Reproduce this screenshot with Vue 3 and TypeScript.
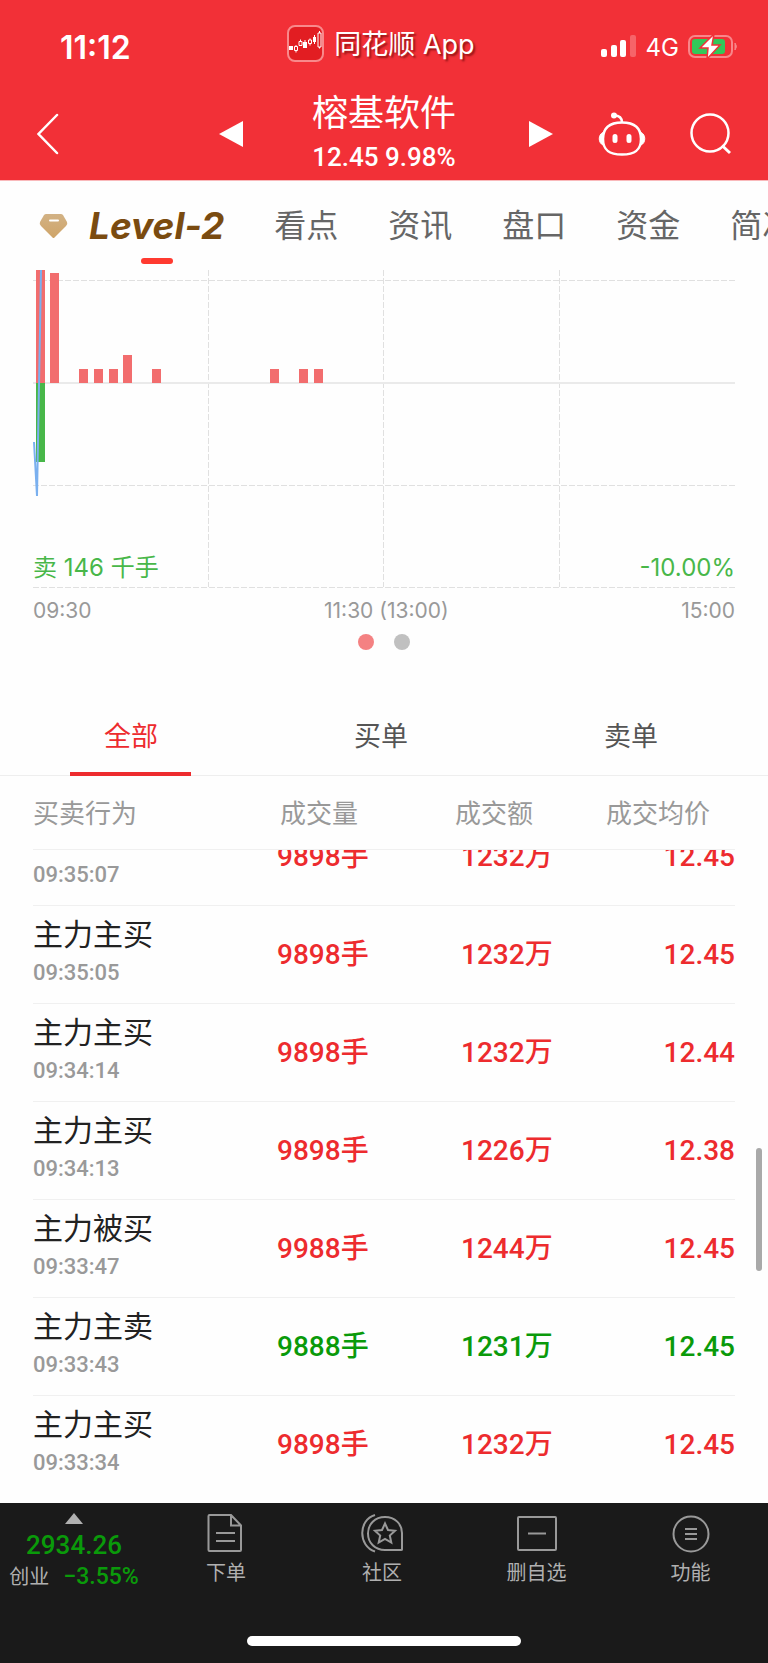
<script setup lang="ts">
interface Deal {
  action: string
  time: string
  volume: string
  amount: string
  price: string
  sell?: boolean
}

interface Bar {
  x: number
  y: number
  h: number
}

const sections: string[] = ['看点', '资讯', '盘口', '资金', '简况']
const filters: string[] = ['全部', '买单', '卖单']

const deals: Deal[] = [
  { action: '主力主买', time: '09:35:07', volume: '9898手', amount: '1232万', price: '12.45' },
  { action: '主力主买', time: '09:35:05', volume: '9898手', amount: '1232万', price: '12.45' },
  { action: '主力主买', time: '09:34:14', volume: '9898手', amount: '1232万', price: '12.44' },
  { action: '主力主买', time: '09:34:13', volume: '9898手', amount: '1226万', price: '12.38' },
  { action: '主力被买', time: '09:33:47', volume: '9988手', amount: '1244万', price: '12.45' },
  { action: '主力主卖', time: '09:33:43', volume: '9888手', amount: '1231万', price: '12.45', sell: true },
  { action: '主力主买', time: '09:33:34', volume: '9898手', amount: '1232万', price: '12.45' },
]

const buyBars: Bar[] = [
  { x: 3, y: 0, h: 113 },
  { x: 17, y: 3, h: 110 },
  { x: 46, y: 99, h: 14 },
  { x: 61, y: 99, h: 14 },
  { x: 76, y: 99, h: 14 },
  { x: 90, y: 85, h: 28 },
  { x: 119, y: 99, h: 14 },
  { x: 237, y: 99, h: 14 },
  { x: 266, y: 99, h: 14 },
  { x: 281, y: 99, h: 14 },
]
</script>

<template>
  <div class="page">
    <header class="top">
      <div class="status">
        <span class="clock">11:12</span>
        <span class="brand">
          <svg class="logo" width="38" height="38" viewBox="0 0 38 38" aria-hidden="true">
            <rect x="1" y="1" width="35" height="35" rx="7" fill="#e21d22" stroke="#f8898b" stroke-width="2" />
            <path d="M2 21h4v4H2zM16 17h4v6h-4zM26 12h3v5h-3z" fill="#fff" />
            <g stroke="#fff" stroke-width="1" fill="none">
              <path d="M18 15v2M27.500 10v9" />
              <path d="M7.500 21.500h3v4h-3zM9 20v1.500M9 25.500v2M12 16.500h3v4h-3zM13.500 14.500v2M21.500 15h3v3.500h-3zM23 13.500V15M23 18.500v2M31 8h3v14h-3zM32.500 6v2M32.500 22v1.500" />
            </g>
          </svg>
          <span class="brand-name">同花顺 App</span>
        </span>
        <span class="signals">
          <svg width="36" height="24" viewBox="0 0 36 24" aria-hidden="true">
            <rect x="0" y="14" width="6" height="8" rx="2" fill="#fff" />
            <rect x="10" y="10" width="6" height="12" rx="2" fill="#fff" />
            <rect x="19" y="5" width="6" height="17" rx="2" fill="#fff" />
            <rect x="29" y="0" width="6" height="22" rx="2" fill="#f66469" />
          </svg>
          <span>4G</span>
          <svg width="50" height="26" viewBox="0 0 50 26" aria-hidden="true">
            <rect x="1" y="2" width="43" height="21" rx="6" fill="none" stroke="#f8868a" stroke-width="2" />
            <path d="M47 9q3 3.500 0 7z" fill="#f8868a" stroke="#f8868a" />
            <rect x="4" y="5" width="33" height="15" rx="3" fill="#33c759" />
            <path d="M26 0 12 14h8l-1 11L32 11h-8z" fill="#fff" stroke="#f13038" stroke-width="1.500" />
          </svg>
        </span>
      </div>
      <nav class="stockbar" aria-label="个股">
        <div class="side left">
          <button type="button" aria-label="返回">
            <svg width="22" height="42" viewBox="0 0 22 42"><path d="M20 2 1.500 21 20 40" fill="none" stroke="#fff" stroke-width="2.500" stroke-linecap="round" /></svg>
          </button>
          <button type="button" aria-label="上一只">
            <svg width="24" height="26" viewBox="0 0 24 26"><path d="M0 13 24 0v26z" fill="#fff" /></svg>
          </button>
        </div>
        <div class="name">
          <h1>榕基软件</h1>
          <p>12.45 9.98%</p>
        </div>
        <div class="side right">
          <button type="button" aria-label="下一只">
            <svg width="24" height="26" viewBox="0 0 24 26"><path d="M24 13 0 0v26z" fill="#fff" /></svg>
          </button>
          <button type="button" aria-label="助手">
            <svg width="48" height="44" viewBox="0 0 48 44" fill="none" stroke="#fff" stroke-width="2.500">
              <path d="M24 10.500c13 0 19 5.500 19 16.500s-6 15.500-19 15.500S5 38 5 27s6-16.500 19-16.500z" />
              <path d="M16 3.500c5 0 8 2 8 7" />
              <circle cx="16" cy="3.500" r="3" fill="#fff" stroke="none" />
              <path d="M5 20.500c-5 2-5 10.500 0 12.500zM43 20.500c5 2 5 10.500 0 12.500z" fill="#fff" stroke-width="1" />
              <path d="M17 24.500v4M31 24.500v4" stroke-width="5" stroke-linecap="round" />
            </svg>
          </button>
          <button type="button" aria-label="搜索">
            <svg width="42" height="42" viewBox="0 0 42 42" fill="none" stroke="#fff" stroke-width="2.500">
              <circle cx="20" cy="20" r="18.500" />
              <path d="M32 32.500 40 40" stroke-width="3" />
            </svg>
          </button>
        </div>
      </nav>
    </header>

    <nav class="sections" aria-label="栏目">
      <svg class="gem" width="34" height="30" viewBox="0 0 34 30" aria-hidden="true">
        <defs>
          <linearGradient id="gem" x1="0" y1="0" x2="0" y2="1">
            <stop offset="0" stop-color="#d2b285" />
            <stop offset="1" stop-color="#cfa468" />
          </linearGradient>
        </defs>
        <path d="M10 3h15q1 0 2 1l4 7q1 2-1 4L18.500 26.500q-1 1-2 0L5 15q-2-2-1-4l4-7q1-1 2-1z" fill="url(#gem)" />
        <path d="M14 9.500h8" stroke="#fff" stroke-width="2" stroke-linecap="round" />
      </svg>
      <a class="level" href="#level2">Level-2</a>
      <a v-for="s in sections" :key="s" :href="'#' + s">{{ s }}</a>
    </nav>

    <section class="chart">
      <div class="plot">
        <svg viewBox="0 0 702 318" aria-hidden="true">
          <g stroke="#e0e0e0" stroke-width="1" stroke-dasharray="6 2">
            <path d="M0 10.500H702M0 215.500H702M0 317.500H702M175.500 0V317M350.500 0V317M526.500 0V317" />
          </g>
          <path d="M0 113H702" stroke="#eaeaea" stroke-width="2" />
          <rect v-for="b in buyBars" :key="b.x" :x="b.x" :y="b.y" width="9" :height="b.h" fill="#f26d6e" />
          <rect x="3" y="113" width="9" height="79" fill="#48b749" />
          <path d="M1 172 4 226 7 60 8 0" fill="none" stroke="#7ab0ef" stroke-width="2" />
        </svg>
        <div class="limits"><span>卖 146 千手</span><span>-10.00%</span></div>
      </div>
      <div class="hours"><span>09:30</span><span>11:30 (13:00)</span><span>15:00</span></div>
      <div class="pager"><i class="on"></i><i></i></div>
    </section>

    <nav class="filters" aria-label="筛选">
      <button v-for="(f, i) in filters" :key="f" type="button" :class="{ active: i === 0 }">{{ f }}</button>
    </nav>

    <main class="list">
      <table>
        <thead>
          <tr><th>买卖行为</th><th>成交量</th><th>成交额</th><th>成交均价</th></tr>
        </thead>
        <tbody>
          <tr v-for="d in deals" :key="d.time" :class="{ sell: d.sell }">
            <td class="deal"><span class="action">{{ d.action }}</span><span class="time">{{ d.time }}</span></td>
            <td class="num">{{ d.volume }}</td>
            <td class="num">{{ d.amount }}</td>
            <td class="num price">{{ d.price }}</td>
          </tr>
        </tbody>
      </table>
      <span class="scrollbar"></span>
    </main>

    <footer class="dock">
      <nav class="tabs" aria-label="工具">
        <button type="button" class="index">
          <svg width="18" height="11" viewBox="0 0 18 11" aria-hidden="true"><path d="M9 0 18 11H0z" fill="#b0b0b0" /></svg>
          <span class="points">2934.26</span>
          <span class="change"><span>创业</span><b>−3.55%</b></span>
        </button>
        <button type="button">
          <svg width="40" height="40" viewBox="0 0 40 40">
            <path d="M3.500 2H25l10 10.500V37q0 1-1 1H3.500q-1 0-1-1V3q0-1 1-1zM25 2v10.500H35M10 20h19M10 28h19" />
          </svg>
          <span>下单</span>
        </button>
        <button type="button">
          <svg width="44" height="40" viewBox="0 0 44 40">
            <path d="M15 2C-2 7-2 33 15 38.500" />
            <path d="M25 4c10 0 17 7 17 16v16.500q0 .5-1 .5H25C15 37 8 30 8 20.500S15 4 25 4z" />
            <path d="M25 10.500l3 6.500 7 .8-5.200 4.700 1.500 7L25 26l-6.300 3.500 1.500-7L15 17.800l7-.8z" />
          </svg>
          <span>社区</span>
        </button>
        <button type="button">
          <svg width="40" height="40" viewBox="0 0 40 40">
            <rect x="1" y="4" width="38" height="33" rx="1" />
            <path d="M11 20.500h18" />
          </svg>
          <span>删自选</span>
        </button>
        <button type="button">
          <svg width="40" height="40" viewBox="0 0 40 40">
            <circle cx="20" cy="21" r="17.500" />
            <path d="M14 16h12M14 21h12M14 26h12" />
          </svg>
          <span>功能</span>
        </button>
      </nav>
      <div class="home"></div>
    </footer>
  </div>
</template>

<style>
body {
  margin: 0;
  background: #fefefe;
}
</style>

<style scoped>
.page {
  display: flex;
  flex-direction: column;
  min-height: 100vh;
  overflow: hidden;
  font-family: Roboto, "Noto Sans CJK SC", sans-serif;
  font-weight: 400;
  color: #222;
}

button {
  padding: 0;
  border: 0;
  background: none;
  font: inherit;
  color: inherit;
  cursor: pointer;
}

a {
  color: inherit;
  text-decoration: none;
}

svg {
  display: block;
}

.top {
  background: #f23037;
  color: #fff;
  border-bottom: 1px solid #f9b9bb;
}

.status {
  display: grid;
  grid-template-columns: 1fr auto 1fr;
  align-items: center;
  height: 88px;
  padding: 0 30px;
  font-family: Inter, "Noto Sans CJK SC", sans-serif;
}

.clock {
  padding: 6px 0 0 30px;
  font-size: 32px;
  font-weight: 600;
}

.brand {
  display: flex;
  align-items: center;
  gap: 9px;
  margin-right: 6px;
  font-size: 27px;
  text-shadow: 2px 2px 2px rgba(90, 0, 0, 0.6);
}

.brand-name {
  padding-bottom: 4px;
}

.signals {
  display: flex;
  justify-content: flex-end;
  align-items: center;
  gap: 9px;
  padding-top: 6px;
  font-size: 24px;
}

.stockbar {
  display: grid;
  grid-template-columns: 1fr 286px 1fr;
  height: 92px;
  padding-left: 4px;
}

.side {
  display: flex;
  align-items: center;
  justify-content: space-between;
}

.left {
  padding-left: 33px;
}

.right {
  padding-right: 36px;
}

.name {
  padding: 1px 4px 0 0;
  text-align: center;
}

.name h1 {
  margin: 0;
  font-size: 36px;
  font-weight: 400;
  line-height: 50px;
}

.name p {
  margin: 0;
  font-size: 26px;
  font-weight: 500;
  line-height: 36px;
}

.sections {
  display: flex;
  align-items: center;
  gap: 50px;
  height: 89px;
  padding-left: 36px;
  font-size: 32px;
  line-height: 44px;
  color: #666;
  white-space: nowrap;
}

.sections a {
  flex: none;
}

.gem {
  flex: none;
  margin-right: -31px;
}

.sections .level {
  position: relative;
  font-family: Inter, sans-serif;
  font-size: 37px;
  font-weight: 700;
  font-style: italic;
  color: #7a4b10;
}

.level::after {
  content: "";
  position: absolute;
  left: calc(50% - 16px);
  bottom: -16px;
  width: 32px;
  height: 6px;
  border-radius: 3px;
  background: #ff3a30;
}

.chart {
  padding: 0 33px;
  font-family: Inter, "Noto Sans CJK SC", sans-serif;
}

.plot {
  position: relative;
}

.limits {
  position: absolute;
  left: 0;
  right: 0;
  bottom: 2px;
  display: flex;
  justify-content: space-between;
  font-size: 24px;
  line-height: 36px;
  color: #48b749;
}

.hours {
  display: flex;
  justify-content: space-between;
  padding-top: 8px;
  font-size: 21px;
  line-height: 30px;
  color: #999;
}

.pager {
  display: flex;
  justify-content: center;
  gap: 20px;
  padding: 8px 0 48px;
}

.pager i {
  width: 16px;
  height: 16px;
  border-radius: 50%;
  background: #c0c0c0;
}

.pager .on {
  background: #f48182;
}

.filters {
  display: grid;
  grid-template-columns: repeat(3, 1fr);
  height: 77px;
  padding: 0 12px 0 6px;
  border-bottom: 1px solid #eee;
  font-size: 27px;
  color: #555;
}

.filters button {
  position: relative;
  padding-bottom: 4px;
}

.filters .active {
  color: #ed2b2e;
}

.filters .active::after {
  content: "";
  position: absolute;
  left: calc(50% - 61px);
  bottom: -1px;
  width: 121px;
  height: 4px;
  background: #ed2b2e;
}

.list {
  position: relative;
  flex: 1;
  overflow: hidden;
  padding: 0 33px 10px;
}

table,
thead,
tbody {
  display: block;
}

thead {
  position: relative;
  z-index: 1;
  background: #fefefe;
}

tr {
  display: grid;
  align-items: center;
  border-bottom: 1px solid #f0f0f0;
}

thead tr {
  grid-template-columns: 247fr 175fr 151fr 129fr;
  height: 73px;
}

th {
  padding: 0 0 2px;
  text-align: left;
  font-size: 26px;
  font-weight: 400;
  color: #999;
}

tbody {
  margin-top: -42px;
}

tbody tr {
  grid-template-columns: 244fr 184fr 150fr 124fr;
  height: 97px;
}

tbody tr:last-child {
  border: 0;
}

td {
  padding: 0;
}

.deal {
  padding-bottom: 7px;
}

.action,
.time {
  display: block;
}

.action {
  font-size: 30px;
  line-height: 44px;
}

/* The first row is scrolled half under the header. */
tr:first-child .action {
  visibility: hidden;
}

.time {
  font-size: 22px;
  font-weight: 500;
  line-height: 32px;
  color: #999;
}

.num {
  font-size: 28px;
  font-weight: 500;
  line-height: 34px;
  color: #ed2b2e;
}

.sell .num {
  color: #0a9a0a;
}

.price {
  text-align: right;
}

.scrollbar {
  position: absolute;
  right: 6px;
  top: 372px;
  width: 6px;
  height: 123px;
  border-radius: 3px;
  background: #a9a9a9;
}

.dock {
  padding-bottom: 17px;
  background: #1a1a1a;
  color: #b0b0b0;
}

.tabs {
  display: grid;
  grid-template-columns: 148fr 156fr 156fr 153fr 155fr;
  height: 133px;
}

.tabs button {
  display: flex;
  flex-direction: column;
  align-items: center;
  padding-top: 10px;
  font-size: 20px;
  line-height: 30px;
}

.tabs button:not(.index) svg {
  margin-bottom: 5px;
  fill: none;
  stroke: #999;
  stroke-width: 2;
}

.points {
  margin-top: 4px;
  font-size: 26px;
  font-weight: 500;
  line-height: 34px;
  color: #0a9a0a;
}

.change {
  display: flex;
  gap: 14px;
}

.change b {
  font-size: 23px;
  font-weight: 500;
  color: #0a9a0a;
}

.home {
  width: 274px;
  height: 10px;
  margin: 0 auto;
  border-radius: 5px;
  background: #fff;
}
</style>
